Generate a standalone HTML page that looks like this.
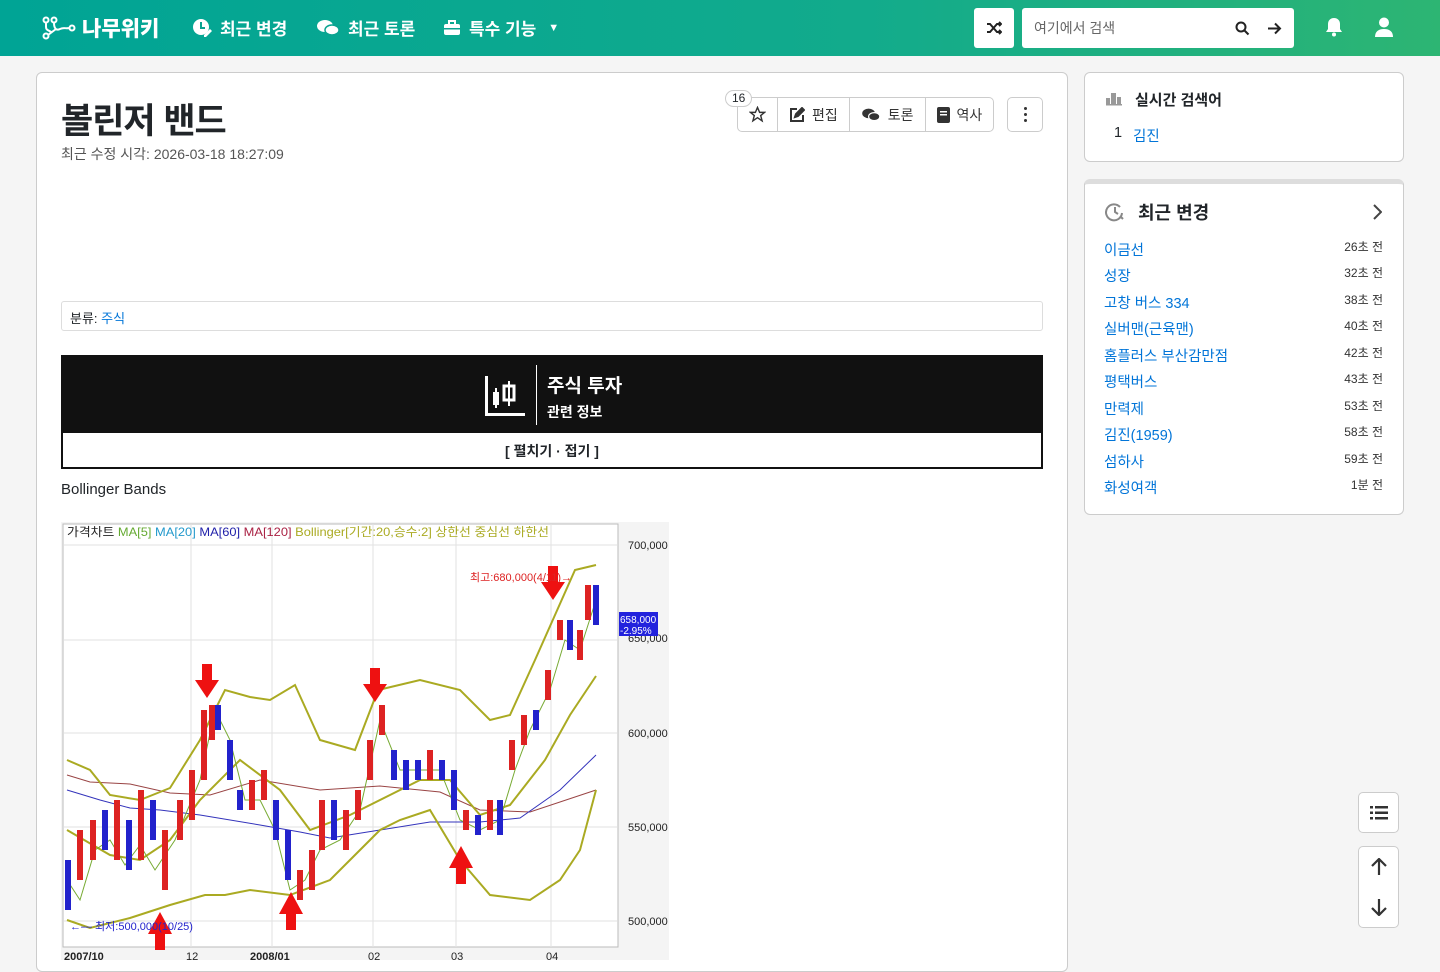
<!DOCTYPE html>
<html lang="ko"><head><meta charset="utf-8">
<style>
*{box-sizing:border-box;margin:0;padding:0}
body{width:1440px;height:960px;overflow:hidden;background:#f5f5f5;font-family:"Liberation Sans","Noto Sans CJK KR",sans-serif;color:#212529}
.nav{position:absolute;left:0;top:0;width:1440px;height:56px;background:linear-gradient(90deg,#00a495,#12ab8c 60%,#2db573);color:#fff}
.nav .it{position:absolute;top:15px;font-size:17px;font-weight:bold;display:flex;align-items:center;gap:8px}
.card{position:absolute;background:#fff;border:1px solid #ccc;border-radius:6px}
a{color:#0275d8;text-decoration:none}
.btns{position:absolute;left:737px;top:97px;height:35px;display:flex;border:1px solid #ccc;border-radius:5px;font-size:14px;color:#333}
.btns div{display:flex;align-items:center;gap:7px;padding:0 11px;border-left:1px solid #ccc}
.btns div:first-child{border-left:none}
.rc{position:absolute;left:1104px;font-size:14.5px}
.rt{position:absolute;right:57px;font-size:12px;color:#333}
.fb{position:absolute;left:1358px;width:41px;background:#fff;border:1px solid #ccc;border-radius:5px;display:flex;align-items:center;justify-content:center}
</style></head><body>
<div class="nav">
  <div class="it" style="left:42px;top:13px;font-size:21px;letter-spacing:0px;font-weight:900;gap:6px">
    <svg width="34" height="24" viewBox="0 0 34 24" fill="none" stroke="#fff" stroke-width="2"><circle cx="4" cy="4" r="2.5"/><circle cx="12" cy="4" r="2.5"/><circle cx="4" cy="20" r="2.5"/><circle cx="30" cy="12" r="2.5"/><path d="M4 7v4c0 4 4 3 6 6 M12 7c0 5 2 8 6 6 4-2 6 0 9-1 M6 19l8-6"/></svg>나무위키</div>
  <div class="it" style="left:192px"><svg width="20" height="20" viewBox="0 0 20 20"><circle cx="9" cy="9" r="8" fill="#fff"/><path d="M9 4v6h4" stroke="#0aa391" stroke-width="2" fill="none"/><path d="M12 17l6-6 2 2-6 6h-2z" fill="#fff"/></svg>최근 변경</div>
  <div class="it" style="left:316px"><svg width="24" height="20" viewBox="0 0 24 20"><ellipse cx="9" cy="8" rx="8" ry="6" fill="#fff"/><ellipse cx="16" cy="12" rx="7" ry="5" fill="#fff" stroke="#0aa391" stroke-width="1.5"/></svg>최근 토론</div>
  <div class="it" style="left:443px"><svg width="18" height="18" viewBox="0 0 18 18"><rect x="1" y="5" width="16" height="11" rx="2" fill="#fff"/><path d="M6 5V2h6v3" stroke="#fff" stroke-width="2" fill="none"/><rect x="1" y="9" width="16" height="1.5" fill="#0aa391"/></svg>특수 기능 <span style="font-size:11px;margin-left:4px">▼</span></div>
  <div style="position:absolute;left:974px;top:8px;width:40px;height:40px;background:#fff;border-radius:3px;display:flex;align-items:center;justify-content:center"><svg width="16" height="14" viewBox="0 0 16 14" fill="none" stroke="#222" stroke-width="2"><path d="M1 3h3l7 8h4M1 11h3l7-8h4M13 1l2 2-2 2M13 9l2 2-2 2"/></svg></div>
  <div style="position:absolute;left:1022px;top:8px;width:272px;height:40px;background:#fff;border-radius:3px;color:#666;font-size:14px;padding:10px 12px">여기에서 검색
    <svg style="position:absolute;left:213px;top:13px" width="15" height="15" viewBox="0 0 15 15" fill="none" stroke="#222" stroke-width="2"><circle cx="6" cy="6" r="4.5"/><path d="M9.5 9.5L13.5 13.5"/></svg>
    <svg style="position:absolute;left:245px;top:13px" width="15" height="15" viewBox="0 0 15 15" fill="none" stroke="#222" stroke-width="2"><path d="M1 7.5h12M8 2.5l5 5-5 5"/></svg></div>
  <svg style="position:absolute;left:1325px;top:17px" width="18" height="20" viewBox="0 0 18 20"><path d="M9 1c-4 0-6 3-6 6v5l-2 3h16l-2-3V7c0-3-2-6-6-6z" fill="#fff"/><circle cx="9" cy="17.5" r="2" fill="#fff"/></svg>
  <svg style="position:absolute;left:1374px;top:17px" width="20" height="20" viewBox="0 0 20 20"><circle cx="10" cy="5.5" r="5" fill="#fff"/><path d="M1 20c0-5 3-8 9-8s9 3 9 8z" fill="#fff"/></svg>
</div>

<div class="card" style="left:36px;top:72px;width:1032px;height:900px">
  <div style="position:absolute;left:24px;top:20px;font-size:35px;font-weight:bold;letter-spacing:-1px">볼린저 밴드</div>
  <div style="position:absolute;left:24px;top:71px;font-size:14px;color:#555">최근 수정 시각: 2026-03-18 18:27:09</div>
  <div style="position:absolute;left:688px;top:17px;height:17px;padding:0 6px;border:1px solid #ccc;border-radius:9px;background:#fff;font-size:12px;z-index:2;line-height:15px">16</div>
  <div style="position:absolute;left:24px;top:228px;width:982px;height:30px;border:1px solid #ddd;border-radius:3px;font-size:13px;padding:6px 8px">분류: <a>주식</a></div>
  <div style="position:absolute;left:24px;top:282px;width:982px;height:114px;border:2px solid #111">
    <div style="height:76px;background:#111;color:#fff;position:relative">
      <svg style="position:absolute;left:422px;top:17px" width="42" height="42" viewBox="0 0 42 42" fill="#fff"><rect x="0" y="2" width="3" height="40"/><rect x="0" y="39" width="40" height="3"/><rect x="8" y="18" width="6" height="13"/><rect x="10" y="14" width="2" height="20"/><rect x="23" y="7" width="2" height="25"/><rect x="19" y="12" width="10" height="14" fill="none" stroke="#fff" stroke-width="3"/></svg>
      <div style="position:absolute;left:473px;top:8px;width:1px;height:60px;background:#fff"></div>
      <div style="position:absolute;left:484px;top:14px;font-size:19px;font-weight:bold">주식 투자</div>
      <div style="position:absolute;left:484px;top:45px;font-size:14px;font-weight:bold">관련 정보</div>
    </div>
    <div style="text-align:center;font-size:14px;font-weight:bold;padding-top:8px">[ 펼치기 · 접기 ]</div>
  </div>
  <div style="position:absolute;left:24px;top:408px;font-size:15px">Bollinger Bands</div>
</div>
<div class="btns"><div><svg width="17" height="17" viewBox="0 0 24 24" fill="none" stroke="#333" stroke-width="2"><path d="M12 2l3 7h7l-5.5 4.5 2 7.5-6.5-4.5-6.5 4.5 2-7.5L2 9h7z"/></svg></div><div><svg width="16" height="16" viewBox="0 0 16 16" fill="none" stroke="#333" stroke-width="2"><path d="M8 2H2v12h12V8"/><path d="M6 10l1-3 6-6 2 2-6 6z" fill="#333"/></svg>편집</div><div><svg width="20" height="16" viewBox="0 0 24 20"><ellipse cx="9" cy="8" rx="8" ry="6" fill="#333"/><ellipse cx="16" cy="12" rx="7" ry="5" fill="#333" stroke="#fff" stroke-width="1.5"/></svg>토론</div><div><svg width="13" height="16" viewBox="0 0 13 16"><rect x="0" y="0" width="13" height="16" rx="2" fill="#333"/><rect x="3" y="4" width="7" height="1.5" fill="#fff"/><rect x="3" y="7" width="7" height="1.5" fill="#fff"/></svg>역사</div></div>
<div style="position:absolute;left:1007px;top:97px;width:36px;height:35px;border:1px solid #ccc;border-radius:5px;display:flex;flex-direction:column;align-items:center;justify-content:center;gap:3px"><i style="width:3px;height:3px;background:#333;border-radius:50%"></i><i style="width:3px;height:3px;background:#333;border-radius:50%"></i><i style="width:3px;height:3px;background:#333;border-radius:50%"></i></div>

<svg style="position:absolute;left:61px;top:522px" width="608" height="438" viewBox="61 522 608 438" font-family="Liberation Sans,Noto Sans CJK KR,sans-serif">
<rect x="61" y="522" width="608" height="438" fill="#f4f4f4"/>
<rect x="63" y="524" width="555" height="423" fill="#fff" stroke="#bbb"/>
<g stroke="#e2e2e2" stroke-width="1"><path d="M64 545H617M64 640H617M64 733H617M64 827H617M64 921H617M191 524V947M272 524V947M373 524V947M456 524V947M551 524V947"/></g>
<text x="67" y="536" font-size="12" fill="#222" textLength="482" lengthAdjust="spacingAndGlyphs">가격차트 <tspan fill="#6a3">MA[5]</tspan> <tspan fill="#29c">MA[20]</tspan> <tspan fill="#22a">MA[60]</tspan> <tspan fill="#a24">MA[120]</tspan> <tspan fill="#aa2">Bollinger[기간:20,승수:2] 상한선  중심선  하한선</tspan></text>
<g font-size="11" fill="#222"><text x="628" y="549">700,000</text><text x="628" y="642">650,000</text><text x="628" y="737">600,000</text><text x="628" y="831">550,000</text><text x="628" y="925">500,000</text><text x="64" y="960" font-weight="bold">2007/10</text><text x="186" y="960">12</text><text x="250" y="960" font-weight="bold">2008/01</text><text x="368" y="960">02</text><text x="451" y="960">03</text><text x="546" y="960">04</text></g>
<rect x="619" y="612" width="39" height="24" fill="#22d"/><text x="620" y="623" font-size="10" fill="#fff">658,000</text><text x="620" y="634" font-size="10" fill="#fff">-2.95%</text>
<path d="M67 775L90 782 130 784 170 793 210 795 260 780 320 790 380 786 440 792 480 810 530 812 596 790" stroke="#944" stroke-width="1" fill="none"/>
<path d="M67 790L100 800 130 808 160 810 200 815 260 825 300 832 330 838 380 830 430 822 480 822 520 818 560 790 596 755" stroke="#33b" stroke-width="1" fill="none"/>
<path d="M67 760L90 770 110 795 140 800 170 788 200 740 225 690 250 697 270 700 295 685 320 740 355 750 378 690 420 680 460 690 490 720 510 715 535 660 555 615 575 570 596 565" stroke="#aa2" stroke-width="2" fill="none"/>
<path d="M67 830L110 855 140 860 170 840 200 800 240 760 280 790 310 830 350 815 390 795 420 780 450 780 480 815 510 805 545 760 570 715 596 676" stroke="#aa2" stroke-width="2" fill="none"/>
<path d="M67 920L90 928 130 918 170 905 205 895 225 895 250 890 290 895 330 880 350 860 380 830 400 820 430 810 460 860 490 895 530 900 560 880 580 850 596 790" stroke="#aa2" stroke-width="2" fill="none"/>
<path d="M67 880L80 900 95 850 110 840 125 865 140 845 155 870 175 840 200 780 215 710 230 740 245 800 260 800 275 830 290 890 305 880 320 850 340 840 360 810 380 720 400 770 420 770 440 770 460 820 480 830 500 820 515 770 530 730 550 690 565 640 580 650 596 600" stroke="#7a3" stroke-width="1" fill="none"/>
<path fill="#d22" d="M77 830h6v50h-6zM90 820h6v40h-6zM114 800h6v60h-6zM138 790h6v70h-6zM162 830h6v60h-6zM177 800h6v40h-6zM189 770h6v50h-6zM201 710h6v70h-6zM209 705h6v35h-6zM249 780h6v30h-6zM261 770h6v30h-6zM297 870h6v30h-6zM309 850h6v40h-6zM319 800h6v50h-6zM343 810h6v40h-6zM355 790h6v30h-6zM367 740h6v40h-6zM379 705h6v30h-6zM427 750h6v30h-6zM463 810h6v20h-6zM487 800h6v30h-6zM509 740h6v30h-6zM521 715h6v30h-6zM545 670h6v30h-6zM557 620h6v20h-6zM577 630h6v30h-6zM585 585h6v35h-6z"/>
<path fill="#22c" d="M65 860h6v50h-6zM102 810h6v40h-6zM126 820h6v50h-6zM150 800h6v40h-6zM215 705h6v25h-6zM227 740h6v40h-6zM237 790h6v20h-6zM273 800h6v40h-6zM285 830h6v50h-6zM331 800h6v40h-6zM391 750h6v30h-6zM403 760h6v30h-6zM415 760h6v20h-6zM439 760h6v20h-6zM451 770h6v40h-6zM475 815h6v20h-6zM497 800h6v35h-6zM533 710h6v20h-6zM567 620h6v30h-6zM593 585h6v40h-6z"/>
<g fill="#e11"><path d="M202 664h10v16h7l-12 18-12-18h7z"/><path d="M370 668h10v16h7l-12 18-12-18h7z"/><path d="M548 566h10v16h7l-12 18-12-18h7z"/><path d="M456 884h10v-16h7l-12-22-12 22h7z"/><path d="M286 930h10v-16h7l-12-22-12 22h7z"/><path d="M155 950h10v-16h7l-12-22-12 22h7z"/></g>
<text x="470" y="581" font-size="11" fill="#d22">최고:680,000(4/11)→</text>
<text x="70" y="930" font-size="11" fill="#22c">←— 최저:500,000(10/25)</text>
</svg>

<div class="card" style="left:1084px;top:72px;width:320px;height:90px">
  <svg style="position:absolute;left:21px;top:19px" width="16" height="14" viewBox="0 0 16 14" fill="#999"><rect x="0" y="6" width="4" height="7"/><rect x="5" y="1" width="5" height="12"/><rect x="11" y="5" width="4" height="8"/><rect x="0" y="12" width="16" height="1.5"/></svg>
  <div style="position:absolute;left:50px;top:16px;font-size:15px;font-weight:bold">실시간 검색어</div>
  <div style="position:absolute;left:29px;top:52px;font-size:14.5px">1</div>
  <a style="position:absolute;left:48px;top:52px;font-size:14.5px">김진</a>
</div>
<div class="card" style="left:1084px;top:179px;width:320px;height:336px;border-top:5px solid #ddd">
  <svg style="position:absolute;left:20px;top:18px" width="20" height="20" viewBox="0 0 20 20" fill="none" stroke="#888" stroke-width="2"><path d="M17 11a8 8 0 1 1-2-6"/><path d="M10 5v5l3 2"/><path d="M15 14l3 3"/></svg>
  <div style="position:absolute;left:53px;top:15px;font-size:18px;font-weight:bold">최근 변경</div>
  <svg style="position:absolute;left:287px;top:20px" width="10" height="16" viewBox="0 0 10 16" fill="none" stroke="#444" stroke-width="2"><path d="M2 1l7 7-7 7"/></svg>
</div>
<a class="rc" style="top:239px">이금선</a><span class="rt" style="top:238px">26초 전</span>
<a class="rc" style="top:265px">성장</a><span class="rt" style="top:264px">32초 전</span>
<a class="rc" style="top:292px">고창 버스 334</a><span class="rt" style="top:291px">38초 전</span>
<a class="rc" style="top:318px">실버맨(근육맨)</a><span class="rt" style="top:317px">40초 전</span>
<a class="rc" style="top:345px">홈플러스 부산감만점</a><span class="rt" style="top:344px">42초 전</span>
<a class="rc" style="top:371px">평택버스</a><span class="rt" style="top:370px">43초 전</span>
<a class="rc" style="top:398px">만력제</a><span class="rt" style="top:397px">53초 전</span>
<a class="rc" style="top:424px">김진(1959)</a><span class="rt" style="top:423px">58초 전</span>
<a class="rc" style="top:451px">섬하사</a><span class="rt" style="top:450px">59초 전</span>
<a class="rc" style="top:477px">화성여객</a><span class="rt" style="top:476px">1분 전</span>

<div class="fb" style="top:792px;height:41px"><svg width="18" height="14" viewBox="0 0 18 14" fill="#333"><rect x="0" y="0" width="3" height="2.5"/><rect x="5" y="0" width="13" height="2.5"/><rect x="0" y="5.5" width="3" height="2.5"/><rect x="5" y="5.5" width="13" height="2.5"/><rect x="0" y="11" width="3" height="2.5"/><rect x="5" y="11" width="13" height="2.5"/></svg></div>
<div class="fb" style="top:846px;height:82px;flex-direction:column;gap:22px"><svg width="16" height="18" viewBox="0 0 16 18" fill="none" stroke="#333" stroke-width="2.2"><path d="M8 17V2M1 8l7-7 7 7"/></svg><svg width="16" height="18" viewBox="0 0 16 18" fill="none" stroke="#333" stroke-width="2.2"><path d="M8 1v15M1 10l7 7 7-7"/></svg></div>
</body></html>
